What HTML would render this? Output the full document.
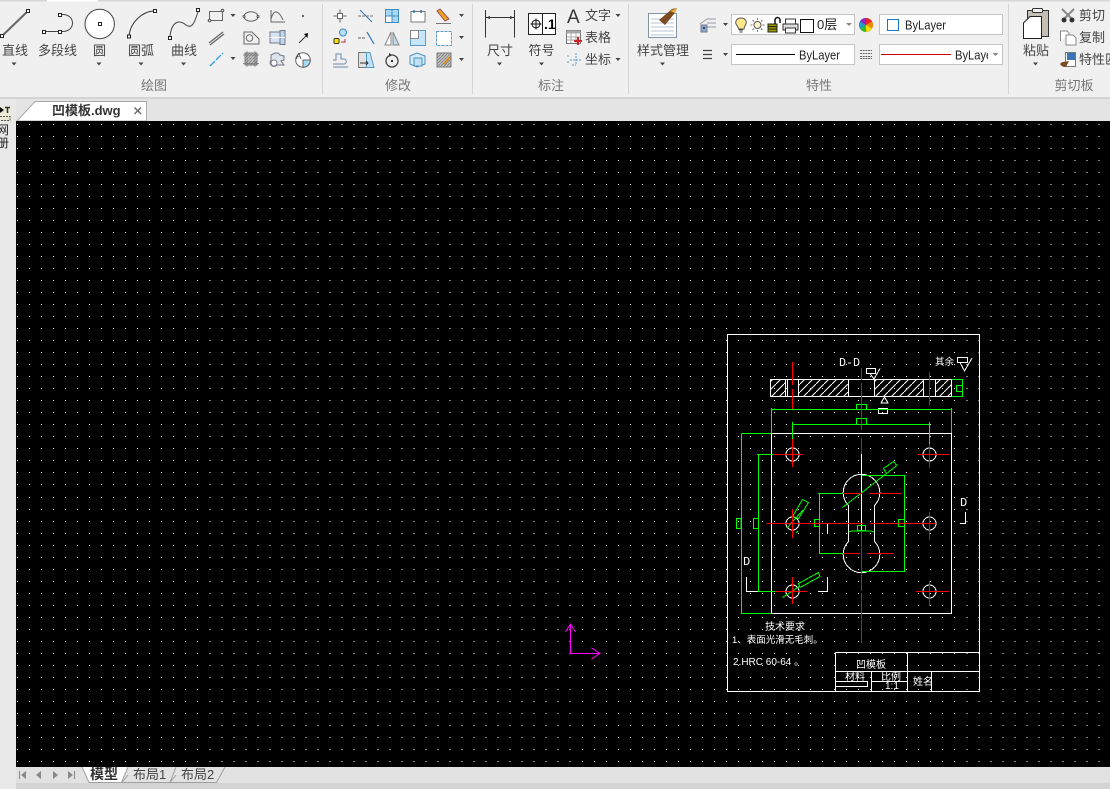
<!DOCTYPE html>
<html lang="zh"><head><meta charset="utf-8"><title>凹模板.dwg</title>
<style>
html,body{margin:0;padding:0;width:1110px;height:789px;overflow:hidden;background:#f0f0f0}
svg{display:block}
text{font-family:"Liberation Sans","Noto Sans CJK SC",sans-serif}
.l{font-size:13px;fill:#444;text-anchor:middle}
.g{font-size:13px;fill:#777;text-anchor:middle}
.s{font-size:13px;fill:#444}
.d{font-size:10px;fill:#fff}
.m{font-size:12px;fill:#fff;font-family:"Liberation Mono",monospace}
.i{fill:none;stroke:#666;stroke-width:1}
</style></head><body>
<svg width="1110" height="789" viewBox="0 0 1110 789" xmlns="http://www.w3.org/2000/svg">
<defs>
<pattern id="h" width="8" height="8" patternUnits="userSpaceOnUse"><path d="M-1 9L9 -1" stroke="#fff" stroke-width="1"/></pattern>
<pattern id="gh" width="3" height="3" patternUnits="userSpaceOnUse"><rect width="3" height="3" fill="#c4c4c4"/><path d="M0 3L3 0" stroke="#888"/></pattern>
<clipPath id="c1"><rect x="950" y="44" width="38" height="21"/></clipPath>
<clipPath id="c2"><rect x="0" y="100" width="10" height="60"/></clipPath>
</defs>

<!-- ribbon -->
<rect width="1110" height="98" fill="#f0f0f0"/>
<rect width="1110" height="1.500" fill="#d6d6d6"/><rect x="47" width="51" height="1.500" fill="#fff"/>
<rect y="97" width="1110" height="2" fill="#d4d4d4"/>
<path d="M322.500 4V94M472.500 4V94M628.500 4V94M1008.500 4V94" stroke="#d4d4d4"/>

<!-- draw group -->
<path d="M2 36L28 11" stroke="#666" stroke-width="2"/>
<g fill="#fff" stroke="#222"><rect x=".5" y="34.500" width="3" height="3"/><rect x="26.500" y="9.500" width="3" height="3"/>
<path d="M46 31.500H58M62 31.500C76 32 76 14 62 14.500" fill="none" stroke="#444"/>
<rect x="42.500" y="30.500" width="3" height="3"/><rect x="58.500" y="30.500" width="3" height="3"/><rect x="58.500" y="13.500" width="3" height="3"/>
<circle cx="99.700" cy="24" r="14.700" fill="#fff" stroke="#444"/><rect x="98.500" y="22.500" width="3" height="3"/>
<path d="M129 35C131 22 142 12 153 11" fill="none" stroke="#333"/>
<rect x="127.500" y="35" width="3" height="3"/><rect x="153.500" y="9.500" width="3" height="3"/>
<path d="M170 36C172 20 180 20 186 25C193 30 195 20 198 12" fill="none" stroke="#444"/>
<rect x="168.500" y="36.500" width="3" height="3"/><rect x="196.500" y="8.500" width="3" height="3"/></g>
<text class="l" x="15" y="55">直线</text><text class="l" x="57.500" y="55">多段线</text><text class="l" x="99.500" y="55">圆</text><text class="l" x="141" y="55">圆弧</text><text class="l" x="184" y="55">曲线</text>
<path fill="#444" d="M11.500 62.500h5l-2.500 3zM96.500 62.500h5l-2.500 3zM138.500 62.500h5l-2.500 3zM181 62.500h5l-2.500 3z"/>
<text class="g" x="154" y="90">绘图</text>
<!-- small draw icons -->
<path class="i" d="M209.500 11.500H222.500V20.500H209.500Z" fill="#f8f8f8"/><circle cx="209.500" cy="20.500" r="1.300" fill="#fff" stroke="#555"/><circle cx="222.500" cy="10.500" r="1.300" fill="#fff" stroke="#555"/>
<ellipse cx="251" cy="16.500" rx="7" ry="4.700" class="i"/><circle cx="244" cy="16.500" r="1" fill="#fff" stroke="#555"/><circle cx="258" cy="16.500" r="1" fill="#fff" stroke="#555"/>
<path class="i" d="M271 10V22H285M271 19C274 8 279 11 283 20"/>
<rect x="302" y="15" width="2" height="2" fill="#666"/>
<path d="M209 43L223 32M210 45L224 34" stroke="#666" stroke-width="1.300"/>
<path class="i" d="M244 32H252L259 39V44H244Z"/><circle cx="249.500" cy="38" r="3.300" class="i"/>
<rect x="270" y="32" width="10" height="11" fill="#d7e3f2" stroke="#778"/><rect x="280" y="30.500" width="5" height="14" fill="#bcd4ee" stroke="#778"/><path d="M270 37.500H285" stroke="#fff"/>
<path d="M299 43L306 36" stroke="#333"/><path d="M304 34L308 33L307.500 38Z" fill="#111"/>
<path d="M210 66L223 53" stroke="#2aa4e6" stroke-width="1.300" stroke-dasharray="7 1.500"/>
<rect x="245" y="53" width="12" height="12" fill="url(#gh)" stroke="#777"/><path d="M243 55H259M243 63.500H259M247 51V67M255 51V67" stroke="#777" stroke-width=".7"/>
<path d="M271 55L275 53H278L280 55L284 56V60L281 61L284 65H277A3.500 3.500 0 1 1 271 60Z" fill="#dfe3ea" stroke="#778"/><circle cx="274" cy="63" r="3" fill="#fff" stroke="#778"/>
<circle cx="303" cy="60" r="7.300" fill="#fff" stroke="#666"/><path d="M303 60H310.300A7.300 7.300 0 0 1 303 67.300Z" fill="#a7dcf8" stroke="#666"/>
<text x="296" y="59" font-size="8" fill="#333">A</text>
<path fill="#444" d="M230.500 14h5l-2.500 3zM230.500 57h5l-2.500 3z"/>

<!-- modify icons -->
<g>
<path d="M340 9.500V22.500M333.500 16H346.500" stroke="#666"/><rect x="337.500" y="13.500" width="5" height="5" fill="#fff" stroke="#666"/>
<path d="M360 10L372 22" stroke="#2a77bb"/><path d="M358 16H373" stroke="#777" stroke-dasharray="3 1"/>
<rect x="385.500" y="9.500" width="13" height="13" fill="#a9d6f2" stroke="#3c8cc0"/><rect x="385.500" y="16" width="6.500" height="6.500" fill="#fff" stroke="#3c8cc0"/><path d="M392 9.500V22.500M385.500 16H398.500" stroke="#3c8cc0"/>
<rect x="411" y="11.500" width="14" height="10.500" fill="#fff" stroke="#777"/><path d="M414 10v3M421 10v3" stroke="#2a77bb" stroke-width="1.500"/>
<path d="M437 11L440 9L449 19L445 21Z" fill="#f0a020" stroke="#955"/><path d="M436 23.500H451" stroke="#777"/>
<circle cx="343" cy="32.500" r="3.500" fill="#b8e0f8" stroke="#3c8cc0"/><rect x="334" y="38.500" width="5" height="5" fill="#ffe000" stroke="#333" rx="1"/><path d="M341 42H345V39" fill="none" stroke="#a33"/>
<path d="M358 38H366" stroke="#777" stroke-dasharray="3 1" stroke-width="1.300"/><path d="M367 32L374 44" stroke="#2a77bb" stroke-width="1.200"/>
<path d="M391 32V45L385 45Z" fill="#fff" stroke="#888"/><path d="M393 32V45L399 45Z" fill="#bcd9ee" stroke="#888"/>
<rect x="410.500" y="30.500" width="15" height="15" fill="#c6e6fb" stroke="#5a9bc6"/><rect x="410.500" y="30.500" width="8" height="8" fill="#fff" stroke="#888"/>
<rect x="436.500" y="31.500" width="15" height="14" fill="#fff" stroke="#5a9bc6" stroke-dasharray="3 1"/>
<path d="M333 64H344C347 64 347 59 344 59H341V54H336V60H333M333 67H348" fill="none" stroke="#6a8aa9"/>
<rect x="358.500" y="52.500" width="8" height="15" fill="#e2e2e2" stroke="#777"/><path d="M366.500 52.500H370L374 67.500H366.500Z" fill="#bfe2f7" stroke="#5a9bc6"/><path d="M360 63H368M366 61l2 2-2 2" fill="none" stroke="#333"/>
<circle cx="392" cy="61" r="6" fill="none" stroke="#444" stroke-width="1.300"/><rect x="391" y="60" width="2" height="2" fill="#333"/><path d="M389 53l3 2-3 2z" fill="#333"/>
<path d="M410 56L417 53L425 56V64L417 67L410 64Z" fill="#d8ecfa" stroke="#4d8fbc"/><rect x="414" y="58" width="8" height="8" fill="#bfe0f7" stroke="#4d8fbc"/>
<rect x="437" y="53" width="14" height="14" fill="url(#gh)" stroke="#777"/><path d="M444 64L450 57" stroke="#e08a1a" stroke-width="2"/>
</g>
<path fill="#444" d="M459 14h5l-2.500 3zM459 36h5l-2.500 3zM459 58h5l-2.500 3z"/>
<text class="g" x="398" y="90">修改</text>

<!-- annotation -->
<path d="M485.500 10V37.500M514.500 10V37.500" stroke="#333"/><path d="M486 17.500H514" stroke="#333"/><path d="M486 17.500l4-1.500v3zM514 17.500l-4-1.500v3z" fill="#333"/>
<text class="l" x="500" y="55">尺寸</text><path fill="#444" d="M497 62.500h5l-2.500 3z"/>
<rect x="528.500" y="13.500" width="27" height="21" fill="#fff" stroke="#222"/><path d="M542.500 13.500V34.500" stroke="#222"/><circle cx="536" cy="24" r="4" fill="none" stroke="#111"/><path d="M536 18.500V29.500M530.500 24H541.500" stroke="#111"/>
<text x="544" y="29" font-size="14" font-weight="bold" fill="#000">.1</text>
<text class="l" x="541.500" y="55">符号</text><path fill="#444" d="M539 62.500h5l-2.500 3z"/>
<text x="567" y="23" font-size="19" fill="#333">A</text>
<text class="s" x="585" y="20">文字</text><path fill="#444" d="M615.500 14h5l-2.500 3z"/>
<rect x="566.500" y="30.500" width="14" height="13" fill="#fff" stroke="#777"/><rect x="566.500" y="30.500" width="14" height="3" fill="#aaa"/><path d="M571 33V43M576 33V43M567 37H580M567 40H580" stroke="#aaa"/><path d="M578 37V45M574 41H582" stroke="#c22" stroke-width="2"/>
<text class="s" x="585" y="42">表格</text>
<path d="M568 55v3M568 61v3M572 65h4M576 53v12M570 60h11" stroke="#5a9bc6" stroke-dasharray="2 1" fill="none"/>
<text class="s" x="585" y="64">坐标</text><path fill="#444" d="M615.500 58h5l-2.500 3z"/>
<text class="g" x="551" y="90">标注</text>

<!-- style -->
<rect x="648.500" y="13.500" width="28" height="24" fill="#fff" stroke="#8394a6"/>
<path d="M651 19H674M651 23H674M651 27H674M651 31H674M651 35H674" stroke="#b7c3d0"/>
<path d="M659 20L672 9L677 8L674 14L665 25Z" fill="#7b4a20"/><path d="M670 11L677 8L675 13Z" fill="#e9a93a"/>
<text class="l" x="663" y="55">样式管理</text><path fill="#444" d="M660 62.500h5l-2.500 3z"/>

<!-- properties -->
<path d="M700 24L707 19H716M707 23H716M707 27H716" stroke="#99a" fill="none"/><rect x="701" y="25" width="6" height="7" fill="#8aaccc" stroke="#778"/><rect x="703" y="27" width="2" height="2" fill="#246"/>
<path fill="#444" d="M723 23h5l-2.500 3zM723 53h5l-2.500 3z"/>
<rect x="731.500" y="14.500" width="123" height="20" fill="#fff" stroke="#c4c4c4"/>
<path d="M741 18C745 18 747 21 746 24C745 26 744 27 744 29H738.500C738.500 27 737 26 736 24C735 21 737 18 741 18Z" fill="#ffe98a" stroke="#555"/><path d="M739 30H743M739.500 32H742.500" stroke="#333"/>
<circle cx="757.500" cy="25" r="3.500" fill="#fff5c8" stroke="#555"/><path d="M757.500 18V20M757.500 30V32M750.500 25H752.500M762.500 25H764.500M752.500 20L754 21.500M762.500 20L761 21.500M752.500 30L754 28.500M762.500 30L761 28.500" stroke="#777"/>
<rect x="768" y="24" width="9" height="8" fill="#9a9a00" stroke="#222"/><path d="M768 26.500H777M768 29H777" stroke="#222"/><path d="M775 24V20A2.500 2.500 0 0 1 780 20V23" fill="none" stroke="#111" stroke-width="1.500"/>
<path d="M783 24H798V30H783Z" fill="#ddd" stroke="#333"/><rect x="785.500" y="19" width="10" height="5" fill="#fff" stroke="#333"/><rect x="785.500" y="28" width="10" height="5" fill="#fff" stroke="#333"/>
<rect x="800.500" y="19.500" width="13" height="13" fill="#fff" stroke="#111"/>
<text x="817" y="29" font-size="13" fill="#222">0层</text>
<path fill="#888" d="M846 23h6l-3 3zM846 53h6l-3 3zM992.500 23h6l-3 3z"/>
<circle cx="866" cy="25" r="7" fill="#888"/>
<path d="M866 25V18A7 7 0 0 1 872 21.500Z" fill="#e22"/><path d="M866 25L872 21.500A7 7 0 0 1 872 28.500Z" fill="#e80"/><path d="M866 25L872 28.500A7 7 0 0 1 866 32Z" fill="#ed0"/><path d="M866 25V32A7 7 0 0 1 860 28.500Z" fill="#3b3"/><path d="M866 25L860 28.500A7 7 0 0 1 860 21.500Z" fill="#29c"/><path d="M866 25L860 21.500A7 7 0 0 1 866 18Z" fill="#82c"/>
<rect x="879.500" y="14.500" width="123" height="20" fill="#fff" stroke="#c4c4c4"/>
<rect x="887.500" y="19.500" width="11" height="11" fill="#fff" stroke="#1a76c8"/>
<text x="905" y="29.500" font-size="13" fill="#222" textLength="41" lengthAdjust="spacingAndGlyphs">ByLayer</text>
<path d="M703 50.500H712M703 54.500H712M703 58.500H712" stroke="#444" stroke-width="1.300"/>
<rect x="731.500" y="44.500" width="123" height="20" fill="#fff" stroke="#c4c4c4"/>
<path d="M736 54.500H795" stroke="#000"/>
<text x="799" y="59.500" font-size="13" fill="#222" textLength="41" lengthAdjust="spacingAndGlyphs">ByLayer</text>
<path d="M860 50.500H872M860 53.500H872M860 56.500H872M860 58.500H872" stroke="#666" stroke-dasharray="2 .7"/>
<rect x="879.500" y="44.500" width="123" height="20" fill="#fff" stroke="#c4c4c4"/>
<path fill="#888" d="M992.500 53h6l-3 3z"/>
<path d="M881 54.500H951" stroke="#c00"/>
<g clip-path="url(#c1)"><text x="955" y="59.500" font-size="13" fill="#222" textLength="41" lengthAdjust="spacingAndGlyphs">ByLayer</text></g>
<text class="g" x="819" y="90">特性</text>

<!-- clipboard -->
<path d="M1027.500 10.500H1048.500V36.500H1027.500Z" fill="#c4beb4" stroke="#333"/><rect x="1032.500" y="8.500" width="10" height="4" rx="1" fill="#f0f0f0" stroke="#333"/>
<path d="M1030 16.500H1041.500V38.500H1023.500V23Z" fill="#fff" stroke="#222"/>
<text class="l" x="1036" y="55">粘贴</text><path fill="#444" d="M1033 62.500h5l-2.500 3z"/>
<path d="M1062 9L1073 20M1074 9L1063 20" stroke="#888" stroke-width="2"/><circle cx="1064" cy="20" r="2.500" fill="#333"/><circle cx="1072" cy="20" r="2.500" fill="#333"/>
<text class="s" x="1079" y="20">剪切</text>
<path d="M1060.500 41V31H1067L1069 33V35" fill="#fff" stroke="#888"/><path d="M1066 35H1073L1076 38V45H1066Z" fill="#fff" stroke="#888"/>
<text class="s" x="1079" y="42">复制</text>
<rect x="1065.500" y="52.500" width="10" height="14" fill="#fff" stroke="#777"/><rect x="1067" y="53" width="8" height="7" fill="#3c74b4"/><path d="M1060 64C1062 61 1066 62 1069 61L1066 67C1064 67 1062 67 1060 64Z" fill="#7b4a20"/>
<text class="s" x="1079" y="64">特性匹配</text>
<text class="g" x="1074" y="90">剪切板</text>

<!-- tab row -->
<rect y="99" width="1110" height="22" fill="#e4e4e4"/>
<rect y="99" width="16" height="690" fill="#e8e8e8"/>
<rect y="106" width="11" height="15" fill="#ecebd8"/>
<path d="M17 121L35 101.500H146.500V121Z" fill="#fff" stroke="#aaa"/>
<text x="52" y="115" font-size="13" font-weight="bold" fill="#333">凹模板.dwg</text>
<path d="M134.500 107.500L141 114M141 107.500L134.500 114" stroke="#666" stroke-width="1.400"/>
<path d="M0 107L4 110L0 113Z" fill="#111"/><path d="M5 107.500H10M7.500 108V113" stroke="#333" stroke-width="1.500"/>
<path d="M0 116.500H10V120.500H0" fill="none" stroke="#555" stroke-dasharray="2 1"/>
<g clip-path="url(#c2)"><text x="-3" y="134" font-size="12" fill="#222">网</text><text x="-3" y="147" font-size="12" fill="#222">册</text></g>

<!-- canvas -->
<rect x="16" y="121" width="1094" height="646" fill="#000"/>
<g fill="none" stroke="#fff" stroke-width="1" stroke-dasharray="1 11.016" shape-rendering="crispEdges">
<path d="M17 124.500H1110"/><path d="M17 136.500H1110"/><path d="M17 148.500H1110"/><path d="M17 160.500H1110"/><path d="M17 172.500H1110"/><path d="M17 184.500H1110"/><path d="M17 196.500H1110"/><path d="M17 208.500H1110"/><path d="M17 220.500H1110"/><path d="M17 232.500H1110"/><path d="M17 244.500H1110"/><path d="M17 256.500H1110"/><path d="M17 268.500H1110"/><path d="M17 280.500H1110"/><path d="M17 292.500H1110"/><path d="M17 304.500H1110"/><path d="M17 316.500H1110"/><path d="M17 328.500H1110"/><path d="M17 340.500H1110"/><path d="M17 352.500H1110"/><path d="M17 364.500H1110"/><path d="M17 376.500H1110"/><path d="M17 388.500H1110"/><path d="M17 400.500H1110"/><path d="M17 412.500H1110"/><path d="M17 424.500H1110"/><path d="M17 436.500H1110"/><path d="M17 448.500H1110"/><path d="M17 460.500H1110"/><path d="M17 472.500H1110"/><path d="M17 484.500H1110"/><path d="M17 497.500H1110"/><path d="M17 509.500H1110"/><path d="M17 521.500H1110"/><path d="M17 533.500H1110"/><path d="M17 545.500H1110"/><path d="M17 557.500H1110"/><path d="M17 569.500H1110"/><path d="M17 581.500H1110"/><path d="M17 593.500H1110"/><path d="M17 605.500H1110"/><path d="M17 617.500H1110"/><path d="M17 629.500H1110"/><path d="M17 641.500H1110"/><path d="M17 653.500H1110"/><path d="M17 665.500H1110"/><path d="M17 677.500H1110"/><path d="M17 689.500H1110"/><path d="M17 701.500H1110"/><path d="M17 713.500H1110"/><path d="M17 725.500H1110"/><path d="M17 737.500H1110"/><path d="M17 749.500H1110"/><path d="M17 761.500H1110"/>
</g>

<!-- UCS -->
<path d="M570.500 625V653.500H600M565.500 632L570.500 624L575.500 632M591.500 648L600 653.500L591.500 659" fill="none" stroke="#f0f" shape-rendering="crispEdges"/>

<!-- drawing -->
<g fill="none" stroke-width="1" shape-rendering="crispEdges">
<rect x="770" y="379" width="16" height="18" fill="url(#h)" stroke="none"/>
<rect x="798" y="379" width="50" height="18" fill="url(#h)" stroke="none"/>
<rect x="874" y="379" width="49" height="18" fill="url(#h)" stroke="none"/>
<rect x="935" y="379" width="17" height="18" fill="url(#h)" stroke="none"/>
<g stroke="#fff">
<rect x="727.500" y="334.500" width="252" height="357"/>
<path d="M770.500 379.500H951.500V396.500H770.500ZM785.500 379.500V396.500M787.500 379.500V396.500M798.500 379.500V396.500M848.500 379.500V396.500M874.500 379.500V396.500M923.500 379.500V396.500M935.500 379.500V396.500"/>
<path d="M771.500 433.500H951.500V613.500H771.500Z"/>
<circle cx="792.500" cy="454.500" r="6.500"/><circle cx="929.500" cy="454.500" r="6.500"/><circle cx="792.500" cy="523.500" r="6.500"/><circle cx="929.500" cy="523.500" r="6.500"/><circle cx="792.500" cy="591.500" r="6.500"/><circle cx="929.500" cy="591.500" r="6.500"/>
<path d="M848.500 505.500A18.300 18.300 0 1 1 874.500 505.500V541.500A18.300 18.300 0 1 1 848.500 541.500Z"/>
<path d="M861.500 454V530"/>
<path d="M746.500 577V591.500H758M818 591.500H827.500V577M827.500 534V523.500H834M960 523.500H965.500V512"/>
<path d="M866.500 368.500H875.500V373.500H866.500ZM870 373.500L874 379L880 368.500"/>
<path d="M881 403L884.500 397L888 403H881ZM878.500 408.500H887.500V413.500H878.500Z"/>
<path d="M957.500 357.500H967.500V362.500H957.500ZM960 362.500L964.500 371L972 358"/>
<path d="M835.500 652.500H979.500M835.500 671.500H979.500M835.500 652.500V691M907.500 652.500V691M871.500 671.500V691M931.500 671.500V691M835.500 681.500H867.500V686.500H835.500M871.500 681.500H907.500"/>
</g>
<g stroke="#0f0">
<path d="M741.500 433.500H771.500M741.500 433.500V613.500H771.500"/>
<path d="M757 454.500H773.500M758.500 454.500V591.500H798"/>
<path d="M771.500 408V433M771.500 409.500H951.500M951.500 408V433M771.500 410L775 409"/>
<path d="M792.500 422V440M792.500 424.500H929.500M929.500 422V450"/>
<rect x="856.500" y="404.500" width="10" height="5"/><rect x="856.500" y="418.500" width="10" height="6"/>
<path d="M951.500 379.500H963M951.500 396.500H963M962.500 379.500V396.500"/><rect x="956.500" y="385.500" width="6" height="6"/>
<rect x="736.500" y="518.500" width="4.500" height="10"/><rect x="753.500" y="518.500" width="5" height="10"/>
<path d="M818 493.500H843M819.500 493.500V553.500H843"/>
<path d="M861.500 475.500H905.500M904.500 475.500V571.500M861.500 571.500H905.500"/>
<rect x="814.500" y="519.500" width="5" height="7"/><rect x="898.500" y="519.500" width="6" height="7"/>
<rect x="857.500" y="525.500" width="8" height="5"/><path d="M848.500 532L852 531H871L874.500 532"/>
<path d="M842.500 507.500L897.500 465M883.500 468.500L893.500 461.500L896.500 465M883.500 468.500L886 473"/>
<path d="M802.500 499.500L808.500 502.500L798.500 518.500L792.500 516.500ZM803 510L787 528M798 531L796 533"/>
<path d="M782.500 597.500L800 586M798.500 583.500L818.500 572.500L820 576.500L800 587.500Z"/>
</g>
<g stroke="#f00">
<path d="M792.500 362V385M792.500 389V409M792.500 439V467M773 454.500H803"/>
<path d="M861.500 368V380M861.500 383V430M861.500 438V454M861.500 531V643" stroke-dasharray="60 2"/>
<path d="M929.500 372V405M918 454.500H950M929.500 444V468"/>
<path d="M792.500 509V538M766.500 523.500H863M870 523.500H935M929.500 512V540"/>
<path d="M792.500 577V604M775 591.500H807M929.500 581V606M916 591.500H949"/>
<path d="M843 493.500H862M869 493.500H902M843 553.500H860M867 553.500H894"/>
</g>
</g>
<text class="m" x="839" y="366" textLength="21" lengthAdjust="spacingAndGlyphs">D-D</text>
<text class="d" x="935" y="365" style="font-size:9.500px">其余</text>
<text class="m" x="960" y="506">D</text>
<text class="m" x="743" y="565">D</text>
<text class="d" x="765" y="630">技术要求</text>
<text class="d" x="732" y="643" style="font-size:9.500px">1、表面光滑无毛刺。</text>
<text class="d" x="733" y="665">2.HRC 60-64 。</text>
<text class="d" x="856" y="668">凹模板</text>
<text class="d" x="845" y="680">材料</text><text class="d" x="881" y="680">比例</text><text class="d" x="885" y="689">1:1</text><text class="d" x="913" y="685">姓名</text>

<!-- bottom -->
<rect x="16" y="767" width="1094" height="16" fill="#e2e2e2"/>
<rect x="16" y="783" width="1094" height="6" fill="#d4d4d4"/>
<path fill="#888" d="M19 771h1v8h-1zM26 771v8l-5-4zM41 771v8l-5-4zM53 771v8l5-4zM68 771v8l5-4zM74 771h1v8h-1z"/>
<path d="M82 767L89 782.500H121.500L128 767Z" fill="#fff"/>
<path d="M82 767L89 782.500H121.500L128 767M122 782.500H170L176 767M170 782.500H216.500L225 767M122 782.500L128 775M170 782.500L176 775" fill="none" stroke="#a0a0a0"/>
<text x="90" y="779" font-size="14" font-weight="bold" fill="#333">模型</text>
<text x="133" y="779" font-size="13" fill="#444">布局1</text>
<text x="181" y="779" font-size="13" fill="#444">布局2</text>
</svg>
</body></html>
